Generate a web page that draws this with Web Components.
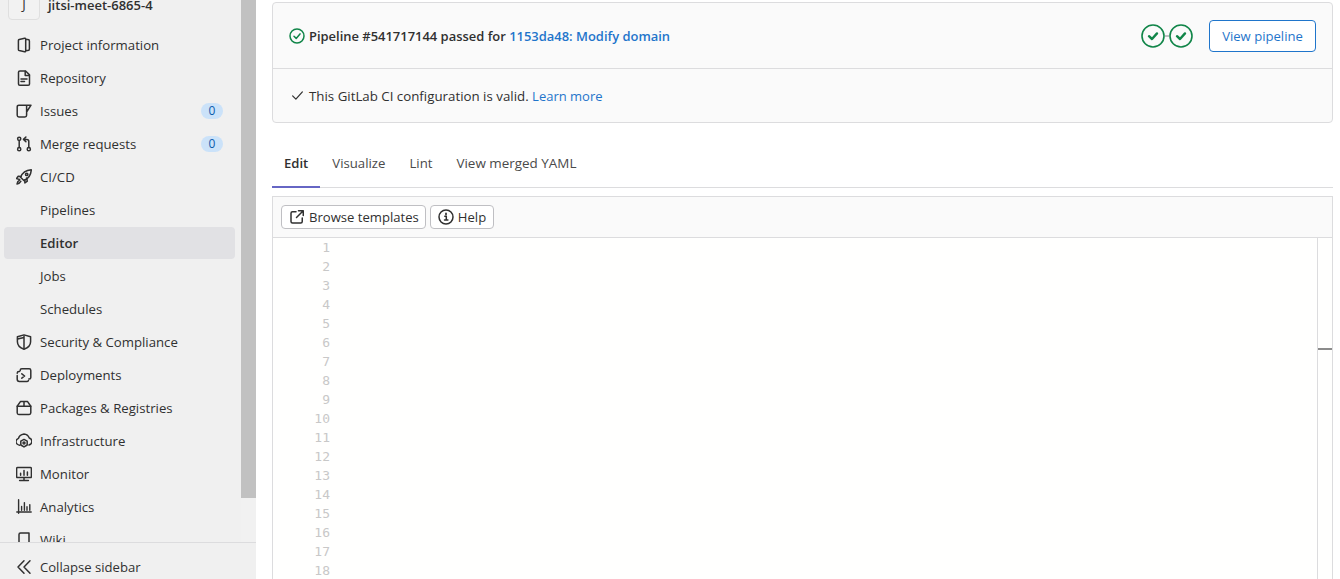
<!DOCTYPE html>
<html>
<head>
<meta charset="utf-8">
<title>CI/CD Editor</title>
<style>
  html, body { margin: 0; height: 579px; overflow: hidden; background: #fff; }
  body { font-family: "Open Sans", "Noto Sans", sans-serif; font-size: 13.1px; color: #303030; display: flex; }
</style>
</head>
<body>
<app-sidebar>
  <side-item icon="project" label="Project information"></side-item>
  <side-item icon="repo" label="Repository"></side-item>
  <side-item icon="issues" label="Issues" count="0"></side-item>
  <side-item icon="merge" label="Merge requests" count="0"></side-item>
  <side-item icon="rocket" label="CI/CD"></side-item>
  <side-item label="Pipelines"></side-item>
  <side-item label="Editor" active></side-item>
  <side-item label="Jobs"></side-item>
  <side-item label="Schedules"></side-item>
  <side-item icon="shield" label="Security &amp; Compliance"></side-item>
  <side-item icon="deploy" label="Deployments"></side-item>
  <side-item icon="package" label="Packages &amp; Registries"></side-item>
  <side-item icon="infra" label="Infrastructure"></side-item>
  <side-item icon="monitor" label="Monitor"></side-item>
  <side-item icon="analytics" label="Analytics"></side-item>
  <side-item icon="book" label="Wiki"></side-item>
</app-sidebar>
<editor-page>
  <status-panel></status-panel>
  <editor-tabs></editor-tabs>
  <yaml-editor lines="18"></yaml-editor>
</editor-page>

<script>
const ICONS = {
  project: '<path d="M8.6 1.2 3.2 2.4Q2.4 2.6 2.4 3.4v9.2q0 .8.8 1l5.4 1.2q1.1.2 1.1-.9V2.1q0-1.1-1.1-.9z"/><path d="M9.7 2.6h2.2q1.5 0 1.5 1.5v7.8q0 1.5-1.5 1.5H9.7"/>',
  repo: '<path d="M3.9 1h5.7L13.5 4.9v9q0 1.3-1.3 1.3H3.8q-1.3 0-1.3-1.3V2.3Q2.5 1 3.9 1z"/><path d="M9.2 1.2v4.2h4.2M5 9h6M5 11.5h3.5"/>',
  issues: '<path d="M10.6 2.2H2.9Q1.2 2.2 1.2 3.9v8.4q0 1.7 1.7 1.7h6q1.7 0 1.7-1.7zh4.4L10.6 9"/>',
  merge: '<circle cx="3.2" cy="2.8" r="1.6"/><circle cx="3.2" cy="13.2" r="1.6"/><circle cx="12.8" cy="13.2" r="1.6"/><path d="M3.2 4.4v7.2M12.8 11.6V5.4q0-2-2-2H8M9.9 1 7.5 3.4l2.4 2.4"/>',
  rocket: '<path d="M4.6 8.3C6.2 4 10 1.2 15.3.8c-.4 5.3-3.2 9.1-7.5 10.7z"/><path d="M5 7.4 2.2 7.2.4 9.6l3.3.9M8.7 11l.2 3 2.4-1.8-.7-3.3M3.6 11.2C2.2 12 1.2 13.4 1 15c1.6-.2 3-1.2 3.8-2.6"/><circle cx="10.7" cy="5.4" r="1.2"/>',
  shield: '<path d="M8 .9 1.4 2.8v4.9c0 3.4 2.4 6 6.6 7.5 4.2-1.5 6.6-4.1 6.6-7.5V2.8z"/><path d="M8 2v12.5M1.6 5 8 3.4"/>',
  deploy: '<path d="M4.2 3.8V3.2Q4.2 1.8 5.8 1.8h7.4q1.6 0 1.6 1.6v7.2q0 1.5-1.6 1.5h-.4"/><path d="M1.2 6.2Q1.2 4.6 3 4.6h.4M1.2 8.6v3.6q0 2.2 2.2 2.2h7.8q1.1 0 1.3-1"/><path d="M5.8 6.8l2.8 2.2-2.8 2.2"/>',
  package: '<path d="M1.2 6.2h13.6v6.6q0 1.6-1.6 1.6H2.8q-1.6 0-1.6-1.6z"/><path d="M1.2 6.2 4.6 1.4h6.8l3.4 4.8M8 1.4v4.8"/>',
  infra: '<path d="M3.6 12.2Q-.2 11.4 0 8.4q.2-2.2 2.5-3Q3.2 1.8 8 1q3.8.3 5.3 4 2.6.9 2.6 3.4 0 2.6-2.9 3.6"/><path d="M8 6.4l3.2 1.8v3.8L8 13.9l-3.2-1.9V8.2z"/><circle cx="8" cy="10.1" r="1"/>',
  monitor: '<rect x=".6" y="1.6" width="14.8" height="10" rx="1"/><path d="M8 11.6v2.6M3.6 14.4h8.8M4.6 9.2V7.2M8 9.2V4.6M11.4 9.2V6"/>',
  analytics: '<path d="M2.6 .8v13.4M.8 13h14.4M5.6 11.2V7.4M8.4 11.2V3.6M11 11.2V7.8M13.8 11.2V5.6" stroke-width="1.4"/>',
  book: '<path d="M3 2.5Q3 1 4.5 1H13v14H4.5Q3 15 3 13.5z"/>',
  collapse: '<path d="M8 1.8 2 8l6 6.2M14 1.8 8 8l6 6.2"/>',
  external: '<path d="M7 2.75H3.5Q2 2.75 2 4.25v8.25q0 1.5 1.5 1.5h8.25q1.5 0 1.5-1.5V9M9.5 1.75h4.75V6.5M14 2 7.5 8.5"/>',
  info: '<circle cx="8" cy="8" r="7"/><path d="M6.8 7.2H8.3v3.6M6.5 11h3.4"/><path d="M8 4.4v1.2" stroke-width="1.7"/>',
  passed: '<circle cx="8" cy="8" r="7"/><path d="M5 8.3 7.2 10.4 11 5.9"/>',
  check: '<path d="M2 8.5 6 12.5 14 3.5"/>'
};

// every icon is a 16x16 stroked svg, the size can be passed in
function icon(name, size = 16) {
  return `<svg width="${size}" height="${size}" viewBox="0 0 16 16" fill="none" stroke="currentColor" stroke-width="1.5" stroke-linecap="round" stroke-linejoin="round" style="display:block;flex:none">${ICONS[name]}</svg>`;
}

class AppSidebar extends HTMLElement {
  constructor() {
    super();
    this.attachShadow({ mode: 'open' });
    this.shadowRoot.innerHTML = `
      <style>
        :host { display: flex; flex: 0 0 256px; height: 579px; background: #f0f0f0; color: #303030; font-size: 13.2px; }
        .left { flex: 1; min-width: 0; display: flex; flex-direction: column; }
        .scroll { flex: 1; min-height: 0; overflow: hidden; }
        .head { display: flex; gap: 8px; margin: -12px 0 9px 8px; height: 32px; }
        .avatar { box-sizing: border-box; width: 32px; height: 32px; border: 1px solid #dfdfdf; border-radius: 4px; background: #f2f2f2; display: flex; align-items: center; justify-content: center; font-size: 13px; }
        .name { font-weight: 600; font-size: 13px; line-height: 34px; height: 32px; }
        nav { display: flex; flex-direction: column; gap: 1px; padding: 0 6px 0 4px; }
        .bar { flex: 0 0 15px; background: #f1f1f1; }
        .bar i { display: block; height: 498px; background: #c1c1c1; }
        .collapse { flex: 0 0 37px; margin-right: -15px; position: relative; display: flex; align-items: center; gap: 8px; padding: 12px 0 0 16px; box-sizing: border-box; border-top: 1px solid #dcdcde; background: #f0f0f0; font-size: 13.1px; }
        .wrap { display: flex; flex: 1; min-width: 0; }
      </style>
      <div class="wrap">
        <div class="left">
          <div class="scroll">
            <div class="head"><div class="avatar">J</div><div class="name">jitsi-meet-6865-4</div></div>
            <nav><slot></slot></nav>
          </div>
          <div class="collapse">${icon('collapse')}<span>Collapse sidebar</span></div>
        </div>
        <div class="bar"><i></i></div>
      </div>`;
  }
}

class SideItem extends HTMLElement {
  constructor() {
    super();
    this.attachShadow({ mode: 'open' });
  }
  connectedCallback() {
    const name = this.getAttribute('icon');
    const count = this.getAttribute('count');
    this.shadowRoot.innerHTML = `
      <style>
        :host { display: flex; align-items: center; gap: 8px; height: 32px; padding: 0 12px; border-radius: 4px; }
        :host([active]) { background: #e1e1e4; font-weight: 600; }
        .slot { flex: 0 0 16px; }
        .label { flex: 1; white-space: nowrap; }
        .count { flex: none; min-width: 22px; height: 16px; border-radius: 8px; background: #cbe2f9; color: #0b5cad; font-size: 12px; line-height: 16px; text-align: center; }
      </style>
      <div class="slot">${name ? icon(name) : ''}</div>
      <div class="label">${this.getAttribute('label').replace('&', '&amp;')}</div>
      ${count !== null ? `<div class="count">${count}</div>` : ''}`;
  }
}

class EditorPage extends HTMLElement {
  constructor() {
    super();
    this.attachShadow({ mode: 'open' });
    this.shadowRoot.innerHTML = `
      <style>
        :host { display: block; flex: 1; min-width: 0; height: 579px; overflow: hidden; padding: 2px 7px 0 16px; }
      </style>
      <slot></slot>`;
  }
}

class StatusPanel extends HTMLElement {
  constructor() {
    super();
    this.attachShadow({ mode: 'open' });
    this.shadowRoot.innerHTML = `
      <style>
        :host { display: block; box-sizing: border-box; height: 121px; border: 1px solid #dcdcde; border-radius: 4px; background: #fafafa; }
        .top { height: 66px; box-sizing: border-box; border-bottom: 1px solid #dcdcde; display: flex; align-items: center; padding: 0 16px; gap: 4px; }
        .ok { color: #108548; }
        b { font-weight: 600; font-size: 12.95px; }
        a { color: #1f75cb; text-decoration: none; }
        .grow { flex: 1; white-space: nowrap; }
        .stages { display: flex; align-items: center; margin-right: 12px; }
        .stages i { width: 4px; height: 2px; background: #bfbfc3; }
        .btn { box-sizing: border-box; height: 32px; width: 107px; border: 1px solid #1f75cb; border-radius: 4px; background: #fff; color: #1f75cb; display: flex; align-items: center; justify-content: center; }
        .bottom { height: 53px; display: flex; align-items: center; padding: 0 18px; gap: 5px; white-space: nowrap; font-size: 13.3px; }
        .bottom a { font-size: 13px; }
      </style>
      <div class="top">
        <span class="ok">${icon('passed')}</span>
        <span class="grow"><b>Pipeline #541717144 passed for <a href="#">1153da48: Modify domain</a></b></span>
        <span class="stages">
          <ci-stage></ci-stage><i></i><ci-stage></ci-stage>
        </span>
        <span class="btn">View pipeline</span>
      </div>
      <div class="bottom">
        ${icon('check', 13)}
        <span>This GitLab CI configuration is valid. <a href="#">Learn more</a></span>
      </div>`;
  }
}

class CiStage extends HTMLElement {
  constructor() {
    super();
    this.attachShadow({ mode: 'open' });
    this.shadowRoot.innerHTML = `
      <style>:host { display: block; width: 24px; height: 24px; color: #108548; }</style>
      <svg width="24" height="24" viewBox="0 0 24 24" fill="none" stroke="currentColor" style="display:block">
        <circle cx="12" cy="12" r="11" stroke-width="1.6"/>
        <path d="M8 12.2 11 15l5-5.6" stroke-width="2.4" stroke-linecap="round" stroke-linejoin="round"/>
      </svg>`;
  }
}

class EditorTabs extends HTMLElement {
  constructor() {
    super();
    this.attachShadow({ mode: 'open' });
    this.shadowRoot.innerHTML = `
      <style>
        :host { display: flex; height: 48px; margin: 17px 0 8px; box-sizing: border-box; border-bottom: 1px solid #dcdcde; font-size: 13.2px; }
        div { padding: 0 12px; height: 48px; box-sizing: border-box; line-height: 47px; white-space: nowrap; color: #4a4a4a; }
        .on { color: #303030; font-weight: 600; font-size: 13.1px; border-bottom: 2px solid #6666c4; }
        .wide { font-size: 13.45px; }
      </style>
      <div class="on">Edit</div><div>Visualize</div><div>Lint</div><div class="wide">View merged YAML</div>`;
  }
}

class YamlEditor extends HTMLElement {
  constructor() {
    super();
    this.attachShadow({ mode: 'open' });
  }
  connectedCallback() {
    const total = Number(this.getAttribute('lines') || 1);
    let nums = '';
    for (let i = 1; i <= total; i++) nums += `<div>${i}</div>`;
    this.shadowRoot.innerHTML = `
      <style>
        :host { display: block; box-sizing: border-box; height: 400px; border: 1px solid #dcdcde; border-bottom: 0; }
        .tools { height: 41px; box-sizing: border-box; background: #fafafa; border-bottom: 1px solid #dcdcde; display: flex; align-items: center; gap: 4px; padding: 0 8px; }
        .tb { box-sizing: border-box; height: 24px; display: flex; align-items: center; gap: 4px; padding: 0 7px; border: 1px solid #bfbfc3; border-radius: 4px; background: #fff; white-space: nowrap; }
        .tb.browse { padding-right: 6px; }
        .body { display: flex; height: 358px; background: #fffffe; }
        .gutter { width: 57px; text-align: right; font: 13px/19px "DejaVu Sans Mono", monospace; color: #c8c8c8; }
        .code { flex: 1; }
        .mini { width: 14px; border-left: 1px solid #dcdcde; }
        .mini i { display: block; height: 2px; margin-top: 110px; background: #8b8b8b; }
      </style>
      <div class="tools">
        <div class="tb browse">${icon('external')}<span>Browse templates</span></div>
        <div class="tb">${icon('info')}<span>Help</span></div>
      </div>
      <div class="body">
        <div class="gutter">${nums}</div>
        <div class="code"></div>
        <div class="mini"><i></i></div>
      </div>`;
  }
}

customElements.define('app-sidebar', AppSidebar);
customElements.define('side-item', SideItem);
customElements.define('editor-page', EditorPage);
customElements.define('status-panel', StatusPanel);
customElements.define('ci-stage', CiStage);
customElements.define('editor-tabs', EditorTabs);
customElements.define('yaml-editor', YamlEditor);
</script>
</body>
</html>
